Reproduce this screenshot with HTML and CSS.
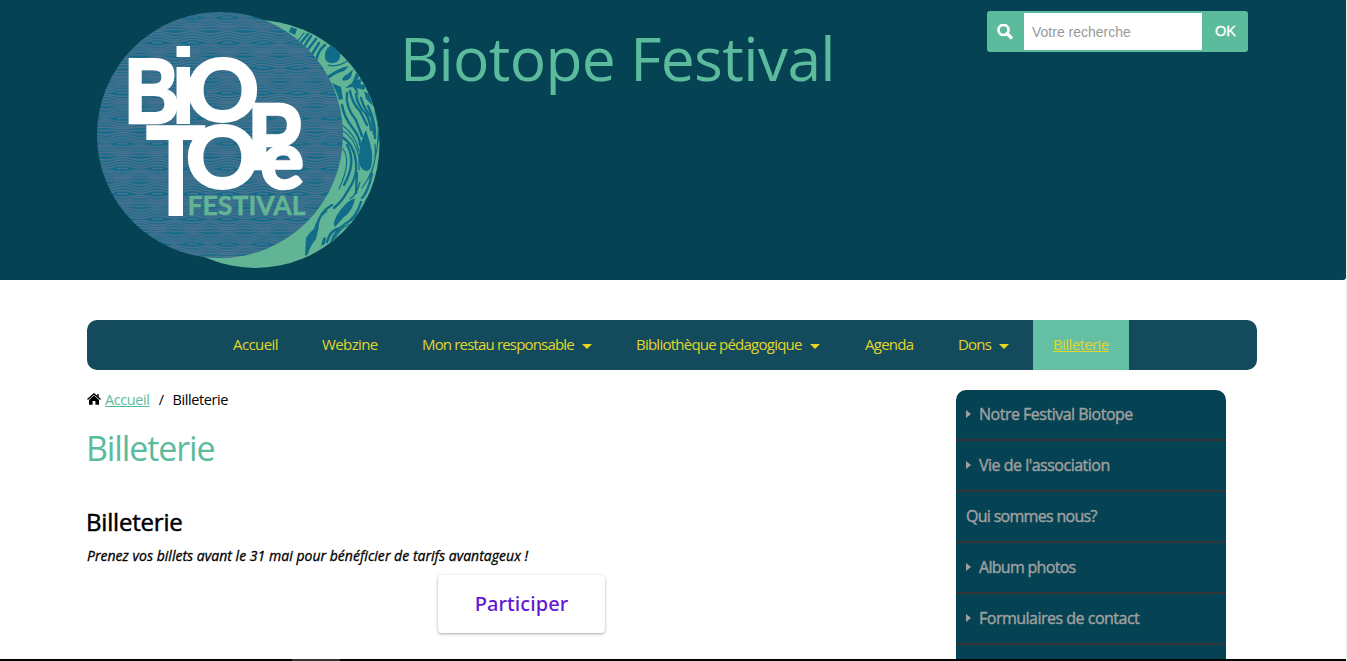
FILE: index.html
```html
<!DOCTYPE html>
<html lang="fr">
<head>
<meta charset="utf-8">
<title>Billeterie - Biotope Festival</title>
<link rel="stylesheet" href="styles.css">
</head>
<body>
<header class="header">
  <svg class="logo" width="286" height="260" viewBox="96 10 286 260" role="img" aria-label="Biotope Festival">
    <defs>
      <pattern id="waves" width="35" height="25.2" patternUnits="userSpaceOnUse" x="0" y="3">
        <rect width="35" height="25.2" fill="#106c89"/>
        <g fill="none" stroke="#50718f" stroke-width="1.5">
          <path d="M0 1.4H35"/>
          <path d="M0 5.700C7 5.700 10 3.400 17.500 3.400S28 5.700 35 5.700"/>
          <path d="M0 9C7 9 10 5.600 17.500 5.600S28 9 35 9"/>
          <path d="M0 11.700C7 11.700 10 8.200 17.500 8.200S28 11.700 35 11.700"/>
          <path d="M0 13.900C7 13.900 10 11.200 17.500 11.200S28 13.900 35 13.900"/>
          <path d="M12 14.600Q17.500 13.500 23 14.600"/>
          <path d="M0 16C7 16 10 18 17.500 18S28 16 35 16"/>
          <path d="M0 18C7 18 10 20.800 17.500 20.800S28 18 35 18"/>
          <path d="M0 20.600C7 20.600 10 23 17.500 23S28 20.600 35 20.600"/>
          <path d="M0 23.400C7 23.400 10 24.800 17.500 24.800S28 23.400 35 23.400"/>
        </g>
      </pattern>
      <clipPath id="disc"><circle cx="255.500" cy="144" r="124"/></clipPath>
    </defs>
    <circle cx="255.500" cy="144" r="124" fill="#62b594"/>
    <g clip-path="url(#disc)" fill="#106c89">
      <path d="M291 27l6 2-2 6-6-3zM330 46q8 0 10 7 1 8-6 10-8 1-9-5-1-8 5-12z"/>
      <path d="M325 78q12-10 24-12l-5 5q-8 2-14 7zM342 80q2-5 6-6l5-5-2 8q-4 5-9 3zM332 83l9 4 2 12-4 1q-2-8-7-17z"/>
      <path d="M352 83l5-12 3 4-3 5 6-2-3 6 6 1-2 5-7-2 2 8-6-9-8 1zM364 91l5 3 4 12-7-7z"/>
      <path d="M366 130q4 12 6 22 1 18-5 19-9-1-8-16 1-13 7-25z"/>
      <path d="M355 198q-2 13-11 19l-9 10q-3-3 2-12 8-13 18-17z"/>
      <path d="M305 256l1-18q6-9 13-12l-3 13q-6 7-8 15zM321 246l2-8 3-1-1 7z"/>
    </g>
    <g clip-path="url(#disc)" fill="none" stroke="#106c89" stroke-linecap="round">
      <g stroke-width="2.400">
        <path d="M308 34l-9 11M311 36l-8 12M316 39l-10 13M319 43l-8 13M325 45q-8 6-9 18M342 105q2 12 10 22 8 10 8 18M347 93q-2 14 9 27l6 16M350 91q2 12 10 20l7 14M356 94q1 11 10 20 4 6 5 16M361 98q3 11 11 20l2 16M368 106q8 16 7 32"/>
        <path d="M342 137q12 7 14 25 2 15-9 30-4 8-13 16M347 145q10 17-3 40M357 173l-1 20M372 174q-4 18-10 24M361 202q-5 16-16 22-10 7-14 19M340 228q-10 2-13 14M332 205q-13 7-15 22"/>
      </g>
      <g stroke-width="1.200">
        <path d="M304 33l-7 9M328 65q9 3 21-5M342 125q13 9 17 26M342 130q13 8 17 27v13M343 149q9 12-4 40M378 118q1 22-2 36-3 20-14 34M375 144q2 18-6 34M360 182q-3 12-10 17M367 198q-8 19-20 25M327 211q-9 6-13 19M350 224q-12 5-17 19M343 107q0 7 5 13M375 112q5 15 3 31"/>
      </g>
    </g>
    <circle cx="220" cy="135" r="123" fill="url(#waves)"/>
    <g class="logo-word">
      <text class="block" transform="translate(124.500 123.200) scale(.77 .92)" font-size="100">B</text>
      <text class="bar" transform="translate(169.700 124) scale(.98 1.080)" font-size="100">i</text>
      <text class="round" transform="translate(186.300 121) scale(.9 .87)" font-size="100">O</text>
      <text class="bar" transform="translate(145.300 215.500) scale(1 1.320)" font-size="100">T</text>
      <text class="round" transform="translate(186 187.500) scale(.9 .87)" font-size="100">O</text>
      <text class="block" transform="translate(248 169) scale(.82 .94)" font-size="100">P</text>
      <text class="round" transform="translate(260.500 187.500) scale(.95)" font-size="85">e</text>
    </g>
    <text class="logo-sub" x="187.500" y="215" textLength="118" lengthAdjust="spacingAndGlyphs">FESTIVAL</text>
  </svg>
  <div class="site-title">Biotope Festival</div>
  <form class="search">
    <svg class="search-icon" width="16" height="16" viewBox="0 0 16 16"><circle cx="6.500" cy="6" r="5" fill="none" stroke="#fff" stroke-width="2.700"/><path d="M10 9.500l4 4" stroke="#fff" stroke-width="3.300" stroke-linecap="round"/></svg>
    <input class="search-input" type="text" placeholder="Votre recherche">
    <button class="search-ok" type="button">OK</button>
  </form>
</header>
<nav class="nav">
  <a class="nav-item accueil">Accueil</a>
  <a class="nav-item webzine">Webzine</a>
  <a class="nav-item restau">Mon restau responsable<i class="caret"></i></a>
  <a class="nav-item biblio">Bibliothèque pédagogique<i class="caret"></i></a>
  <a class="nav-item agenda">Agenda</a>
  <a class="nav-item dons">Dons<i class="caret"></i></a>
  <a class="nav-item active">Billeterie</a>
</nav>
<div class="columns">
  <main class="content">
    <div class="crumbs">
      <svg width="14" height="12" viewBox="0 0 14 12"><path d="M7 2.600L12 7v4.700H8.400V8H5.600v3.700H2V7z"/><path d="M.5 6.500L7 .9l6.500 5.600M11 1v3" fill="none" stroke="#000" stroke-width="1.400"/></svg>
      <a class="crumb-link">Accueil</a><span class="slash">/</span><span class="crumb-here">Billeterie</span>
    </div>
    <h1 class="page-title">Billeterie</h1>
    <h2 class="section-title">Billeterie</h2>
    <p class="notice">Prenez vos billets avant le 31 mai pour bénéficier de tarifs avantageux !</p>
    <a class="join">Participer</a>
  </main>
  <aside class="side">
    <a class="side-item"><i class="tri"></i>Notre Festival Biotope</a>
    <a class="side-item"><i class="tri"></i>Vie de l'association</a>
    <a class="side-item tight">Qui sommes nous?</a>
    <a class="side-item tight"><i class="tri"></i>Album photos</a>
    <a class="side-item"><i class="tri"></i>Formulaires de contact</a>
  </aside>
</div>
<div class="bottom"><div class="thumb"></div></div>
</body>
</html>
```
FILE: styles.css
```css
* { box-sizing: border-box; }
body { margin: 0; height: 661px; overflow: hidden; display: flex; flex-direction: column; background: #fff; border-right: 1px solid #eee; font-family: "Open Sans", "Noto Sans", sans-serif; color: #000; }
.header { height: 280px; flex: none; display: flex; align-items: flex-start; background: #054253; padding: 10px 98px 0 96px; border-bottom-right-radius: 3px; }
.logo { flex: none; }
.logo-word { font-weight: 700; fill: #fff; stroke: #fff; stroke-linejoin: miter; }
.block { font-family: "Liberation Sans", sans-serif; stroke-width: 2.5; }
.bar { font-family: "Liberation Sans", sans-serif; stroke-width: 0; }
.round { font-family: Lato, sans-serif; stroke-width: 3.500; }
.logo-sub { font-family: Lato, sans-serif; font-weight: 700; font-size: 27px; fill: #62b594; stroke: #62b594; stroke-width: .4; }
.site-title { margin: 6px 0 0 18px; font-size: 60.5px; line-height: 84px; letter-spacing: -.65px; color: #5cbb9d; white-space: nowrap; }
.search { margin: 1px 0 0 auto; width: 261px; height: 41px; display: flex; align-items: center; background: #5cbb9d; border-radius: 3px; font-family: "Liberation Sans", sans-serif; }
.search-icon { margin: 0 11px 0 10px; flex: none; }
.search-input { width: 178px; height: 37px; border: 0; padding: 1px 8px 0; font: 14px "Liberation Sans", sans-serif; }
.search-input::placeholder { color: #999; }
.search-ok { flex: 1; border: 0; padding: 0 0 2px 1px; background: none; color: #fff; font: 14.5px "Liberation Sans", sans-serif; -webkit-text-stroke: .3px #fff; }
.nav { margin: 40px 0 0 87px; width: 1170px; height: 50px; flex: none; display: flex; padding-left: 126px; background: #134b5c; border-radius: 10px; overflow: hidden; font-size: 15px; line-height: 48px; color: #e2d52b; }
.nav-item { flex: none; padding-left: 20px; white-space: nowrap; letter-spacing: -.6px; }
.accueil { width: 89px; }
.webzine { width: 100px; }
.restau { width: 214px; letter-spacing: -.83px; }
.biblio { width: 229px; letter-spacing: -.76px; }
.agenda { width: 93px; letter-spacing: -.75px; }
.dons { width: 95px; letter-spacing: -.8px; }
.active { width: 96px; background: #65bfa3; text-decoration: underline; }
.caret { display: inline-block; margin-left: 8px; vertical-align: 1px; border: 5px solid transparent; border-top-color: #e9d71e; border-bottom: 0; }
.columns { display: flex; flex: 1; padding: 20px 0 0 87px; min-height: 0; }
.content { width: 869px; display: flex; flex-direction: column; }
.crumbs { display: flex; align-items: center; height: 18px; font-size: 14.5px; letter-spacing: -.4px; }
.crumb-link { margin-left: 4px; color: #5cbb9d; text-decoration: underline; }
.slash { margin: 0 9px; }
.page-title { margin: 16px 0 0 -1px; font-size: 34px; line-height: 48px; font-weight: 400; letter-spacing: -1.1px; color: #5cbb9d; }
.section-title { margin: 34px 0 0 -1px; font-size: 24px; line-height: 32px; font-weight: 500; letter-spacing: -.2px; -webkit-text-stroke: .5px #000; }
.notice { margin: 8px 0 0; font-size: 14px; line-height: 20px; font-style: italic; letter-spacing: .03px; -webkit-text-stroke: .3px #000; }
.join { margin: 9px 0 0 351px; width: 167px; height: 58px; border-radius: 4px; box-shadow: 0 1px 3px rgba(0,0,0,.35); text-align: center; font: 500 20px/58px "Noto Sans", sans-serif; letter-spacing: .1px; color: #6418d4; }
.side { width: 270px; background: #054253; border-radius: 10px 10px 0 0; overflow: hidden; }
.side-item { height: 51px; display: flex; align-items: center; padding: 0 0 1px 10px; border-bottom: 2px solid #343536; color: #a0a0a0; font-size: 16px; letter-spacing: -.5px; -webkit-text-stroke: .4px #a0a0a0; }
.tight { letter-spacing: -.7px; }
.tri { border: 4px solid transparent; border-left: 5px solid #a0a0a0; border-right: 0; margin-right: 8px; }
.bottom { height: 2px; flex: none; background: #000; margin-right: -1px; }
.thumb { width: 48px; height: 2px; margin-left: 292px; background: #333; }
```
